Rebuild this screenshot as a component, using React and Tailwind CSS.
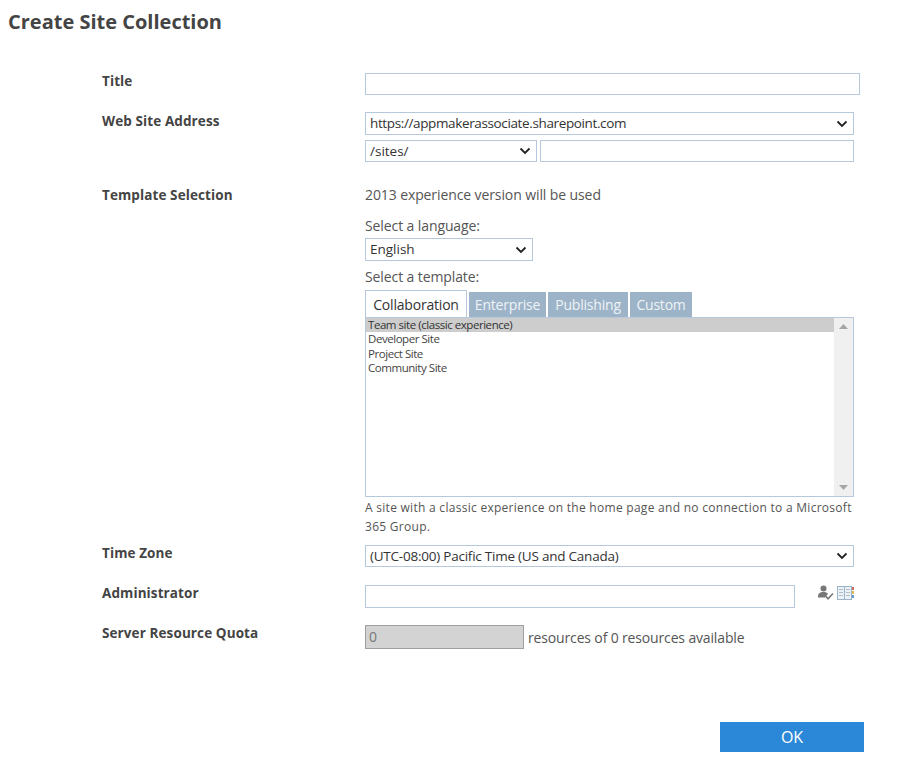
function Row({ label, className = '', labelClassName = '', children }) {
    return (
        <div className={`flex ${className}`}>
            <div className={`w-[263px] shrink-0 text-[13.5px] leading-[16px] font-bold tracking-[0.1px] text-[#444] ${labelClassName}`}>{label}</div>
            <div className="flex-1 min-w-0">{children}</div>
        </div>
    );
}

function Select({ value, className = '' }) {
    return (
        <div className={`flex items-center justify-between border border-[#b6c9dc] bg-white pl-[4px] text-[13.5px] text-[#333] ${className}`}>
            <span>{value}</span>
            <svg width="12" height="8" viewBox="0 0 12 8" className="mr-[5px]">
                <path d="M1.5 1.5 L6 6 L10.5 1.5" fill="none" stroke="#222" strokeWidth="1.8" />
            </svg>
        </div>
    );
}

function Tab({ label, className = '' }) {
    return (
        <div className={`h-[25px] bg-[#9db4c8] text-center text-[14px] leading-[25px] tracking-[-0.2px] text-[#eef3f7] ${className}`}>
            {label}
        </div>
    );
}

function PeopleCheck() {
    return (
        <svg width="17" height="15" viewBox="0 0 17 15">
            <circle cx="6.5" cy="3.5" r="3" fill="#777" />
            <path d="M1 11.5 C1 8 3.5 7 6.5 7 C8.5 7 10 7.6 11 8.8 L8 12.5 L1 12.5 Z" fill="#777" />
            <path d="M8.5 11 L11 13.8 L16 8.5" fill="none" stroke="#777" strokeWidth="1.6" />
        </svg>
    );
}

function AddressBook() {
    return (
        <svg width="17" height="14" viewBox="0 0 17 14">
            <rect x="0.5" y="0.5" width="7" height="13" fill="#eaf1f7" stroke="#9db4c8" />
            <rect x="7.5" y="0.5" width="7" height="13" fill="#eaf1f7" stroke="#9db4c8" />
            <path d="M2 3.5h4M2 6.5h4M2 9.5h4M9 3.5h4M9 6.5h4M9 9.5h4" stroke="#b4bec8" />
            <rect x="15" y="1" width="2" height="3" fill="#d9685a" />
            <rect x="15" y="5" width="2" height="3" fill="#e0b94f" />
            <rect x="15" y="9" width="2" height="3" fill="#5c9ad1" />
        </svg>
    );
}

export default function App() {
    const templates = ['Team site (classic experience)', 'Developer Site', 'Project Site', 'Community Site'];

    return (
        <div className="h-[768px] w-[917px] overflow-hidden bg-white font-['Open_Sans','Noto_Sans',sans-serif] text-[#555]">
            <h1 className="pl-[8px] pt-[8px] text-[20px] leading-[28px] font-bold text-[#444]">Create Site Collection</h1>

            <div className="mt-[37px] pl-[102px]">
                <Row label="Title">
                    <div className="h-[22px] w-[495px] border border-[#b6c9dc] bg-white" />
                </Row>

                <Row label="Web Site Address" className="mt-[17px]" labelClassName="pt-[1px]">
                    <Select value="https://appmakerassociate.sharepoint.com" className="h-[23px] w-[489px] tracking-[-0.37px]" />
                    <div className="mt-[5px] flex gap-[3px]">
                        <Select value="/sites/" className="h-[22px] w-[172px]" />
                        <div className="h-[22px] w-[314px] border border-[#b6c9dc] bg-white" />
                    </div>
                </Row>

                <Row label="Template Selection" className="mt-[24px]" labelClassName="pt-[1px]">
                    <div className="text-[14px] leading-[18px] tracking-[-0.1px]">2013 experience version will be used</div>
                    <div className="mt-[13px] text-[14px] leading-[18px] tracking-[-0.1px]">Select a language:</div>
                    <Select value="English" className="mt-[3px] h-[23px] w-[168px]" />
                    <div className="mt-[7px] text-[14px] leading-[18px] tracking-[-0.1px]">Select a template:</div>
                    <div className="mt-[4px] flex items-end">
                        <div className="h-[27px] w-[102px] border border-b-0 border-[#b6c9dc] bg-white text-center text-[14px] leading-[27px] tracking-[-0.2px] text-[#333]">
                            Collaboration
                        </div>
                        <Tab label="Enterprise" className="ml-[2px] w-[77px]" />
                        <Tab label="Publishing" className="ml-[2px] w-[80px]" />
                        <Tab label="Custom" className="ml-[2px] w-[62px]" />
                    </div>
                    <div className="flex h-[180px] w-[489px] border border-[#b6c9dc] bg-white">
                        <div className="flex-1 text-[11.5px] leading-[14.4px] tracking-[-0.45px] text-[#444]">
                            {templates.map((t, i) => (
                                <div key={t} className={i === 0 ? 'bg-[#cdcdcd] pl-[2px] text-[#333]' : 'pl-[2px]'}>{t}</div>
                            ))}
                        </div>
                        <div className="flex w-[19px] flex-col items-center justify-between bg-[#f0f0f0] py-[6px]">
                            <svg width="9" height="5" viewBox="0 0 9 5"><path d="M0 5 L4.5 0 L9 5 Z" fill="#a6a6a6" /></svg>
                            <svg width="9" height="5" viewBox="0 0 9 5"><path d="M0 0 L9 0 L4.5 5 Z" fill="#a6a6a6" /></svg>
                        </div>
                    </div>
                    <div className="w-[495px] pt-[1px] text-[12px] leading-[19px] tracking-[0.28px] text-[#555]">
                        A site with a classic experience on the home page and no connection to a Microsoft 365 Group.
                    </div>
                </Row>

                <Row label="Time Zone" className="mt-[9px]">
                    <Select value="(UTC-08:00) Pacific Time (US and Canada)" className="h-[22px] w-[489px] tracking-[-0.23px]" />
                </Row>

                <Row label="Administrator" className="mt-[18px]">
                    <div className="flex items-start">
                        <div className="h-[23px] w-[430px] border border-[#b6c9dc] bg-white" />
                        <div className="ml-[22px] flex items-center gap-[3px]">
                            <PeopleCheck />
                            <AddressBook />
                        </div>
                    </div>
                </Row>

                <Row label="Server Resource Quota" className="mt-[17px]">
                    <div className="flex items-center gap-[4px]">
                        <div className="h-[24px] w-[159px] border border-[#a0a0a0] bg-[#d3d3d3] pl-[3px] text-[14px] leading-[22px] text-[#777]">0</div>
                        <div className="text-[14px] tracking-[-0.15px]">resources of 0 resources available</div>
                    </div>
                </Row>

                <div className="mt-[73px] flex justify-end pr-[53px]">
                    <button className="h-[30px] w-[144px] bg-[#2b88d8] text-[16px] text-white">OK</button>
                </div>
            </div>
        </div>
    );
}
